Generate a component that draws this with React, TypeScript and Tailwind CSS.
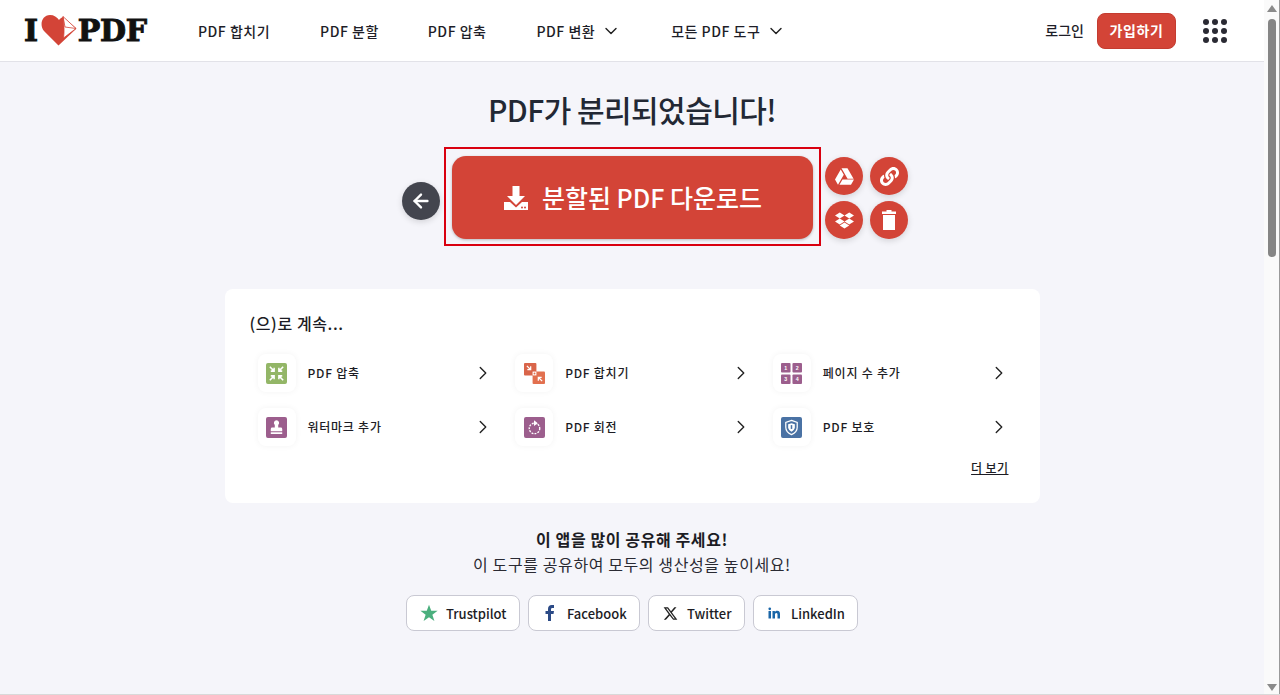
import React from "react";
import { ChevronDown, ChevronRight, ArrowLeft } from "lucide-react";
import { FaGoogleDrive, FaDropbox, FaLink } from "react-icons/fa";

const font = "font-['Noto_Sans_CJK_KR','Noto_Sans',sans-serif]";

function Logo() {
  return (
    <div className="flex items-center h-[32px] w-[124px] shrink-0 text-[#111] font-['DejaVu_Serif',serif] font-bold text-[30px] leading-none tracking-[-0.25px] [-webkit-text-stroke:1px_#111]">
      <span>I</span>
      <svg width="36" height="31" viewBox="0 0 36 31" className="ml-[3px] mr-[1px] shrink-0">
        <path d="M17.500 30.500 L3 16 C-2 10 1 0 9 0 C13 0 16 2 18 5 C19 3.500 20.500 2.500 22 2 L35.500 13.500 Z" fill="#d34437" />
        <path d="M22 1.500 L35 13.500 L22.500 23 C23.500 16 23 9 22 1.500Z" fill="#fff" stroke="#d34437" strokeWidth="0.8" />
        <path d="M22 1.500 L24 12 L35 13.500" fill="none" stroke="#d34437" strokeWidth="0.8" />
      </svg>
      <span>PDF</span>
    </div>
  );
}

function NavItem({ children, chevron, className = "" }: { children: React.ReactNode; chevron?: boolean; className?: string }) {
  return (
    <div className={`flex items-center text-[14px] font-medium text-[#1e1e28] tracking-[0.5px] leading-none ${className}`}>
      <span>{children}</span>
      {chevron && <ChevronDown size={20} strokeWidth={1.7} className="ml-[6px] text-[#222]" />}
    </div>
  );
}

function Circle({ children, dark }: { children: React.ReactNode; dark?: boolean }) {
  return (
    <div className={`w-[38px] h-[38px] rounded-full flex items-center justify-center shadow-[0_2px_6px_rgba(0,0,0,0.14)] ${dark ? "bg-[#43454e]" : "bg-[#d34437]"}`}>
      {children}
    </div>
  );
}

const Compress = () => (
  <svg width="21" height="21" viewBox="0 0 22 22">
    <rect width="22" height="22" rx="2" fill="#93b667" />
    <g stroke="#fff" strokeWidth="1.6" fill="none">
      <path d="M4 4l4 4M8.500 5v3.500H5M18 4l-4 4M13.500 5v3.500H17M4 18l4-4M8.500 17v-3.500H5M18 18l-4-4M13.500 17v-3.500H17" />
    </g>
  </svg>
);
const Merge = () => (
  <svg width="21" height="21" viewBox="0 0 22 22">
    <rect x="0" y="0" width="13" height="13" rx="1" fill="#d9654a" />
    <rect x="9" y="9" width="13" height="13" rx="1" fill="#e2704f" />
    <path d="M9 9h4v4H9z" fill="#fff" />
    <circle cx="11" cy="11" r="1" fill="#e2704f" />
    <g stroke="#fff" strokeWidth="1.3" fill="none">
      <path d="M3 3l3.500 3.500M7 3.500V7H3.500M19 19l-3.500-3.500M15 18.500V15h3.500" />
    </g>
  </svg>
);
const Pages = () => (
  <svg width="21" height="21" viewBox="0 0 22 22" fontFamily="'Liberation Sans',sans-serif" fontSize="5.500" fontWeight="700" fill="#fff" textAnchor="middle">
    <rect width="10" height="10" rx="1" fill="#9c5e8d" />
    <rect x="12" width="10" height="10" rx="1" fill="#9c5e8d" />
    <rect y="12" width="10" height="10" rx="1" fill="#9c5e8d" />
    <rect x="12" y="12" width="10" height="10" rx="1" fill="#9c5e8d" />
    <text x="5" y="7">1</text>
    <text x="17" y="7">2</text>
    <text x="5" y="19">3</text>
    <text x="17" y="19">4</text>
  </svg>
);
const Stamp = () => (
  <svg width="21" height="21" viewBox="0 0 22 22">
    <rect width="22" height="22" rx="2" fill="#9c5e8d" />
    <path d="M11 3.500a2.800 2.800 0 0 1 1.800 4.900V11h2.700a1.500 1.500 0 0 1 1.500 1.500V15H5v-2.500A1.500 1.500 0 0 1 6.500 11h2.700V8.400A2.800 2.800 0 0 1 11 3.500z" fill="#fff" />
    <rect x="5" y="16" width="12" height="1.800" fill="#fff" />
  </svg>
);
const Rotate = () => (
  <svg width="21" height="21" viewBox="0 0 22 22">
    <rect width="22" height="22" rx="2" fill="#9c5e8d" />
    <circle cx="11" cy="12" r="5.500" fill="none" stroke="#fff" strokeWidth="1.400" strokeDasharray="2 1.200" />
    <path d="M10.500 3.500l4 3-4 3z" fill="#fff" />
  </svg>
);
const Shield = () => (
  <svg width="21" height="21" viewBox="0 0 22 22">
    <rect width="22" height="22" rx="2" fill="#4a72a4" />
    <path d="M11 3.500l6 2.200v5c0 3.500-2.500 6.200-6 7.800-3.500-1.600-6-4.300-6-7.800v-5z" fill="none" stroke="#fff" strokeWidth="1.300" />
    <path d="M11 6.500l3.500 1.200v3c0 2-1.400 3.600-3.500 4.700-2.100-1.100-3.500-2.700-3.500-4.700v-3z" fill="#fff" />
    <rect x="10.200" y="8.500" width="1.600" height="4" fill="#4a72a4" />
  </svg>
);

function Tool({ icon, label }: { icon: React.ReactNode; label: string }) {
  return (
    <div className="flex items-center h-[38px]">
      <div className="w-[38px] h-[38px] rounded-lg bg-white shadow-[0_0_6px_rgba(0,0,0,0.05)] flex items-center justify-center shrink-0">
        {icon}
      </div>
      <span className="ml-[12px] flex-1 text-[12px] font-medium text-[#1c1c24] tracking-[0.75px] leading-none">{label}</span>
      <ChevronRight size={22} strokeWidth={1.500} className="text-[#222] -mr-[3px]" />
    </div>
  );
}

function Share({ icon, label, className }: { icon: React.ReactNode; label: string; className: string }) {
  return (
    <div className={`h-9 rounded-lg border border-[#c9c9d3] bg-white flex items-center text-[13px] font-medium text-[#1c1c24] ${className}`}>
      {icon}
      <span className="leading-none">{label}</span>
    </div>
  );
}

const ArrowTri = ({ down, className }: { down?: boolean; className: string }) => (
  <svg width="10" height="8" viewBox="0 0 10 8" className={className}>
    <path d={down ? "M5 8L10 1H0z" : "M5 0l5 7H0z"} fill="#8a8a8a" />
  </svg>
);

export default function App() {
  return (
    <div className={`${font} w-[1280px] h-[695px] overflow-hidden flex bg-[#f5f5fa] border-b border-[#d9d9d9]`}>
      <div className="flex-1 flex flex-col min-w-0">
        <header className="h-[62px] shrink-0 bg-white border-b border-[#e2e2e8] flex items-center pl-6 pr-[37px]">
          <Logo />
          <nav className="flex items-center ml-[50px]">
            <NavItem>PDF 합치기</NavItem>
            <NavItem className="ml-[50px]">PDF 분할</NavItem>
            <NavItem className="ml-[49px]">PDF 압축</NavItem>
            <NavItem chevron className="ml-[50px]">PDF 변환</NavItem>
            <NavItem chevron className="ml-[50px]">모든 PDF 도구</NavItem>
          </nav>
          <div className="ml-auto flex items-center">
            <span className="text-[14px] font-medium text-[#1e1e28]">로그인</span>
            <div className="ml-[13px] w-[79px] h-9 rounded-lg bg-[#d34437] border border-[#c43c30] text-white text-[14px] font-bold tracking-[0.6px] flex items-center justify-center">가입하기</div>
            <div className="ml-[27px] grid grid-cols-3 gap-[3px]">
              {Array.from({ length: 9 }).map((_, i) => (
                <span key={i} className="w-[6px] h-[6px] rounded-full bg-[#2a2a33]" />
              ))}
            </div>
          </div>
        </header>

        <main className="flex-1 flex flex-col items-center">
          <h1 className="mt-[27px] text-[30px] font-medium leading-[40px] text-[#222834] tracking-[-0.55px]">PDF가 분리되었습니다!</h1>
          <div className="mt-[18px] ml-[46px] flex items-center">
            <div className="mt-[9px]"><Circle dark><ArrowLeft size={22} strokeWidth={2.600} className="text-white" /></Circle></div>
            <div className="ml-[4px] w-[377px] h-[99px] border-2 border-[#d9000f] pt-[7px] px-[6px]">
              <div className="h-[83px] rounded-[14px] bg-[#d34437] shadow-[0_1px_3px_rgba(0,0,0,0.25)] flex items-center justify-center text-white text-[25px] font-medium">
                <svg width="26" height="26" viewBox="0 0 26 26" className="mr-[13px]" fill="#fff">
                  <path d="M9.500 1h7v10h5.500L13 20 4 11h5.500z" />
                  <path d="M1 17h6l6 5.500 6-5.500h6v8H1z" />
                  <circle cx="19" cy="22.500" r="1" fill="#d34437" />
                  <circle cx="22" cy="22.500" r="1" fill="#d34437" />
                </svg>
                <span className="leading-none">분할된 PDF 다운로드</span>
              </div>
            </div>
            <div className="ml-[4px] mt-[3px] grid grid-cols-2 gap-x-[7px] gap-y-[6px]">
              <Circle><FaGoogleDrive size={19} className="text-white" /></Circle>
              <Circle><FaLink size={19} className="text-white" /></Circle>
              <Circle><FaDropbox size={19} className="text-white" /></Circle>
              <Circle>
                <svg width="14" height="20" viewBox="0 0 14 20" fill="#fff">
                  <path d="M4.500 0h5v1.500H14V4H0V1.500h4.500zM1 5h12v15H1z" />
                </svg>
              </Circle>
            </div>
          </div>

          <section className="mt-[43px] w-[815px] h-[214px] bg-white rounded-lg pt-[22px]">
            <h2 className="pl-[25px] text-[16px] font-medium leading-[24px] tracking-[0.6px] text-[#1c1c24]">(으)로 계속...</h2>
            <div className="mt-[19px] px-[33px] grid grid-cols-3 gap-x-[24px] gap-y-[16px]">
              <Tool icon={<Compress />} label="PDF 압축" />
              <Tool icon={<Merge />} label="PDF 합치기" />
              <Tool icon={<Pages />} label="페이지 수 추가" />
              <Tool icon={<Stamp />} label="워터마크 추가" />
              <Tool icon={<Rotate />} label="PDF 회전" />
              <Tool icon={<Shield />} label="PDF 보호" />
            </div>
            <div className="mt-[13px] pr-[31px] text-right text-[12px] font-medium leading-[18px] tracking-[0.4px] text-[#1c1c24] underline">더 보기</div>
          </section>

          <p className="mt-[24px] text-[16px] font-bold leading-[24px] tracking-[0.6px] text-[#1c1c24]">이 앱을 많이 공유해 주세요!</p>
          <p className="mt-[1px] text-[16px] leading-[24px] tracking-[0.6px] text-[#2a2a33]">이 도구를 공유하여 모두의 생산성을 높이세요!</p>

          <div className="mt-[19px] flex gap-2">
            <Share className="w-[114px] pl-[13px]" label="Trustpilot" icon={
              <svg width="18" height="18" viewBox="0 0 24 24" className="mr-[8px]"><path d="M12 1l3 8h8.500l-7 5.200 2.700 8.600L12 17.500 4.800 22.800l2.700-8.600-7-5.200H9z" fill="#4aaf7d" /></svg>
            } />
            <Share className="w-[112px] pl-[16px]" label="Facebook" icon={
              <svg width="10" height="16" viewBox="0 0 10 16" className="mr-[12px]"><path d="M3 16V9H.5V6H3V4c0-2.500 1.500-4 3.700-4H9v3H7.500C6.400 3 6 3.500 6 4.500V6h3l-.5 3H6v7z" fill="#2b4a86" /></svg>
            } />
            <Share className="w-[97px] pl-[14px]" label="Twitter" icon={
              <svg width="15" height="15" viewBox="0 0 24 24" className="mr-[9px]"><path d="M18.200 2h3.400l-7.400 8.500L23 22h-6.800l-5.400-7-6.100 7H1.300l7.900-9L1 2h7l4.800 6.400zM17 20h1.900L7 3.900H5z" fill="#222" /></svg>
            } />
            <Share className="w-[105px] pl-[14px]" label="LinkedIn" icon={
              <svg width="12" height="12" viewBox="0 0 24 24" className="mr-[11px]"><path d="M1 8h5v15H1zM3.500 1a2.700 2.700 0 1 1 0 5.400 2.700 2.700 0 0 1 0-5.400zM9 8h4.800v2.100C14.700 8.700 16.300 7.700 18.500 7.700c4.300 0 5.500 2.700 5.500 6.800V23h-5v-7.500c0-2-.5-3.500-2.300-3.500-2 0-2.700 1.500-2.700 3.500V23H9z" fill="#1a66a8" /></svg>
            } />
          </div>
        </main>
      </div>

      <aside className="w-4 shrink-0 bg-[#fafafa] border-r border-[#9a9a9a] flex flex-col items-start pl-[3px]">
        <ArrowTri className="mt-[5px]" />
        <div className="mt-[6px] ml-[1px] w-2 h-[238px] rounded-full bg-[#858585]" />
        <ArrowTri down className="mt-auto mb-[3px]" />
      </aside>
    </div>
  );
}
